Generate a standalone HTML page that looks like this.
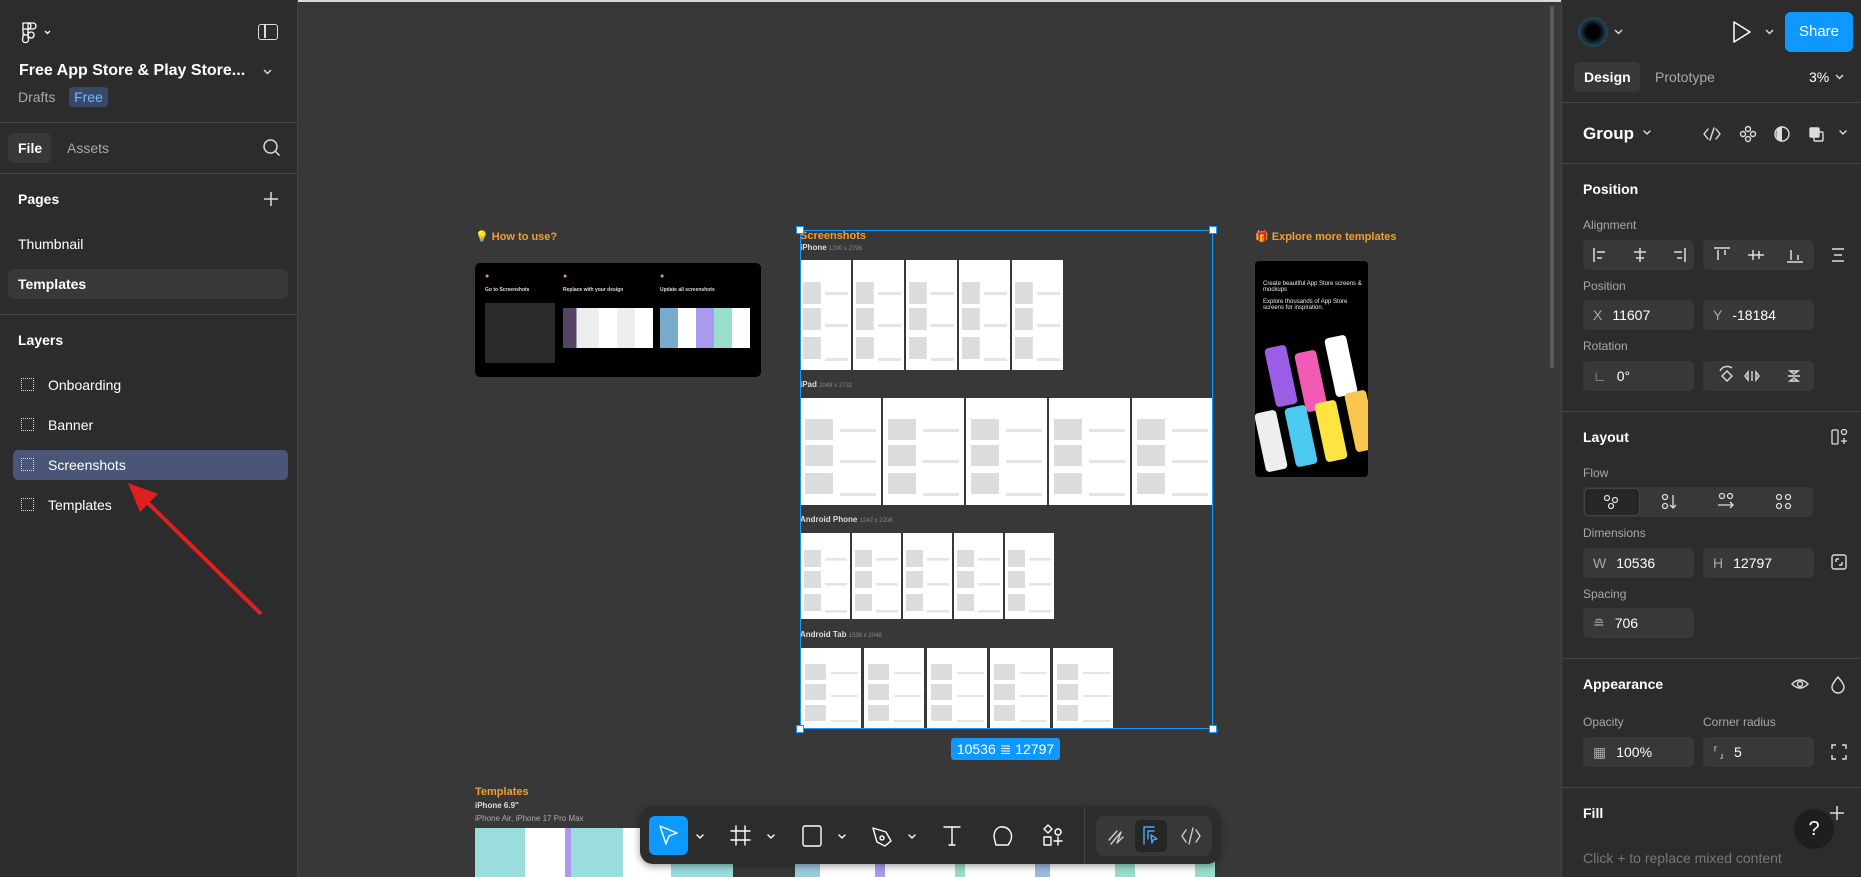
<!DOCTYPE html>
<html><head><meta charset="utf-8"><style>
*{margin:0;padding:0;box-sizing:border-box}
body{width:1861px;height:877px;overflow:hidden;background:#383838;font-family:"Liberation Sans",sans-serif;color:#fff;position:relative}
.a{position:absolute}
.lp{left:0;top:0;width:298px;height:877px;background:#2c2c2c;border-right:1px solid #444}
.rp{left:1561px;top:0;width:300px;height:877px;background:#2c2c2c;border-left:1px solid #444}
.hr{position:absolute;left:0;right:0;height:1px;background:#444}
.t{position:absolute;font-size:14px;white-space:nowrap;line-height:1}
.b{font-weight:bold}
.g{color:#a8a8a8}
.lbl{position:absolute;font-size:12px;color:#a8a8a8;white-space:nowrap;line-height:1}
.fld{position:absolute;background:#383838;border-radius:5px;height:30px;font-size:14px;line-height:30px;padding-left:10px}
.fld span{color:#a8a8a8;margin-right:10px}
.fr{position:absolute;background-color:#fff;background-image:linear-gradient(#dcdcdc,#dcdcdc),linear-gradient(#dcdcdc,#dcdcdc),linear-gradient(#dcdcdc,#dcdcdc),linear-gradient(#e4e4e4,#e4e4e4),linear-gradient(#e4e4e4,#e4e4e4),linear-gradient(#e4e4e4,#e4e4e4);background-size:35% 20%,35% 20%,35% 20%,45% 3%,45% 3%,45% 3%;background-position:10% 25%,10% 55%,10% 88%,90% 30%,90% 60%,90% 92%;background-repeat:no-repeat}
.h{position:absolute;width:8px;height:8px;background:#fff;border:1px solid #0d99ff}
.cl{position:absolute;font-size:11px;font-weight:bold;color:#f0a030;white-space:nowrap}
.wl{position:absolute;font-size:8px;font-weight:bold;color:#ddd;white-space:nowrap}
.wl i{font-style:normal;font-weight:normal;color:#888;font-size:6px}
</style></head><body>
<div class="a" style="left:0;top:0;width:1861px;height:2px;background:#d8d8d8"></div>

<!-- canvas -->
<div class="a" style="left:1550px;top:6px;width:4px;height:362px;background:#5a5a5a;border-radius:2px"></div>
<div class="cl" style="left:475px;top:230px">💡 How to use?</div>
<div class="a" style="left:475px;top:263px;width:286px;height:114px;background:#000;border-radius:5px">
 <div class="a" style="left:10px;top:40px;width:70px;height:60px;background:#2a2a2a"></div>
 <div class="a" style="left:88px;top:45px;width:90px;height:40px;background:linear-gradient(90deg,#546 0 15%,#eee 15% 40%,#fff 40% 60%,#eee 60% 80%,#fff 80%)"></div>
 <div class="a" style="left:185px;top:45px;width:90px;height:40px;background:linear-gradient(90deg,#7ac 0 20%,#fff 20% 40%,#a9e 40% 60%,#9dc 60% 80%,#fff 80%)"></div>
 <div class="a" style="left:10px;top:10px;font-size:7px;color:#f0a030;font-weight:bold">●</div>
 <div class="a" style="left:88px;top:10px;font-size:7px;color:#f0a030;font-weight:bold">●</div>
 <div class="a" style="left:185px;top:10px;font-size:7px;color:#f0a030;font-weight:bold">●</div>
 <div class="a" style="left:10px;top:24px;font-size:5px;color:#ddd;font-weight:bold">Go to Screenshots</div>
 <div class="a" style="left:88px;top:24px;font-size:5px;color:#ddd;font-weight:bold">Replace with your design</div>
 <div class="a" style="left:185px;top:24px;font-size:5px;color:#ddd;font-weight:bold">Update all screenshots</div>
</div>

<div class="cl" style="left:800px;top:230px">Screenshots</div>
<div class="wl" style="left:800px;top:243px">iPhone <i>1290 x 2796</i></div>
<div class="fr" style="left:800px;top:260px;width:51px;height:110px"></div>
<div class="fr" style="left:853px;top:260px;width:51px;height:110px"></div>
<div class="fr" style="left:906px;top:260px;width:51px;height:110px"></div>
<div class="fr" style="left:959px;top:260px;width:51px;height:110px"></div>
<div class="fr" style="left:1012px;top:260px;width:51px;height:110px"></div>
<div class="wl" style="left:800px;top:380px">iPad <i>2048 x 2732</i></div>
<div class="fr" style="left:800px;top:398px;width:81px;height:107px"></div>
<div class="fr" style="left:883px;top:398px;width:81px;height:107px"></div>
<div class="fr" style="left:966px;top:398px;width:81px;height:107px"></div>
<div class="fr" style="left:1049px;top:398px;width:81px;height:107px"></div>
<div class="fr" style="left:1132px;top:398px;width:81px;height:107px"></div>
<div class="wl" style="left:800px;top:515px">Android Phone <i>1242 x 2208</i></div>
<div class="fr" style="left:801px;top:533px;width:49px;height:86px"></div>
<div class="fr" style="left:852px;top:533px;width:49px;height:86px"></div>
<div class="fr" style="left:903px;top:533px;width:49px;height:86px"></div>
<div class="fr" style="left:954px;top:533px;width:49px;height:86px"></div>
<div class="fr" style="left:1005px;top:533px;width:49px;height:86px"></div>
<div class="wl" style="left:800px;top:630px">Android Tab <i>1536 x 2048</i></div>
<div class="fr" style="left:801px;top:648px;width:60px;height:81px"></div>
<div class="fr" style="left:864px;top:648px;width:60px;height:81px"></div>
<div class="fr" style="left:927px;top:648px;width:60px;height:81px"></div>
<div class="fr" style="left:990px;top:648px;width:60px;height:81px"></div>
<div class="fr" style="left:1053px;top:648px;width:60px;height:81px"></div>
<div class="a" style="left:800px;top:230px;width:413px;height:499px;border:1px solid #0d99ff"></div>
<div class="h" style="left:796px;top:226px"></div><div class="h" style="left:1209px;top:226px"></div>
<div class="h" style="left:796px;top:725px"></div><div class="h" style="left:1209px;top:725px"></div>
<div class="a" style="left:951px;top:738px;width:109px;height:22px;background:#0d99ff;border-radius:3px;font-size:14px;line-height:22px;text-align:center">10536 ≣ 12797</div>

<div class="cl" style="left:1255px;top:230px">🎁 Explore more templates</div>
<div class="a" style="left:1255px;top:261px;width:113px;height:216px;background:#000;border-radius:4px;overflow:hidden">
 <div class="a" style="left:8px;top:20px;font-size:6px;color:#eee;width:100px;white-space:normal">Create beautiful App Store screens &amp; mockups<br><br>Explore thousands of App Store screens for inspiration.</div>
 <div class="a" style="left:15px;top:85px;width:22px;height:60px;background:#9b5de5;border-radius:4px;transform:rotate(-12deg)"></div>
 <div class="a" style="left:45px;top:90px;width:22px;height:60px;background:#f15bb5;border-radius:4px;transform:rotate(-12deg)"></div>
 <div class="a" style="left:75px;top:75px;width:22px;height:60px;background:#fff;border-radius:4px;transform:rotate(-12deg)"></div>
 <div class="a" style="left:5px;top:150px;width:22px;height:60px;background:#eee;border-radius:4px;transform:rotate(-12deg)"></div>
 <div class="a" style="left:35px;top:145px;width:22px;height:60px;background:#4cc9f0;border-radius:4px;transform:rotate(-12deg)"></div>
 <div class="a" style="left:65px;top:140px;width:22px;height:60px;background:#fee440;border-radius:4px;transform:rotate(-12deg)"></div>
 <div class="a" style="left:95px;top:130px;width:22px;height:60px;background:#f9c74f;border-radius:4px;transform:rotate(-12deg)"></div>
</div>

<div class="cl" style="left:475px;top:786px">Templates</div>
<div class="wl" style="left:475px;top:801px">iPhone 6.9"</div>
<div class="a" style="left:475px;top:814px;font-size:8px;color:#aaa">iPhone Air, iPhone 17 Pro Max</div>
<div class="a" style="left:475px;top:828px;width:740px;height:49px;background:linear-gradient(90deg,#9dd 0 50px,#fff 50px 55px,#fff 55px 90px,#a9e 90px 96px,#9dd 96px 148px,#fff 148px 196px,#9dd 196px 258px,#383838 258px 320px,#9cd 320px 345px,#fff 345px 400px,#a9e 400px 410px,#fff 410px 480px,#9dc 480px 490px,#fff 490px 560px,#9bd 560px 575px,#fff 575px 640px,#9dc 640px 660px,#fff 660px 720px,#9dc 720px)"></div>

<!-- toolbar -->
<div class="a" style="left:640px;top:807px;width:580px;height:57px;background:#2c2c2c;border-radius:13px;box-shadow:0 2px 8px rgba(0,0,0,.4)">
 <div class="a" style="left:9px;top:9px;width:39px;height:39px;background:#0d99ff;border-radius:6px"></div>
 <div class="a" style="left:444px;top:0;width:1px;height:57px;background:#444"></div>
 <div class="a" style="left:456px;top:9px;width:116px;height:40px;background:#383838;border-radius:8px"></div>
 <div class="a" style="left:495px;top:13px;width:32px;height:32px;background:#262626;border-radius:5px"></div>
 <svg class="a" style="left:0;top:0" width="580" height="57" fill="none" stroke="#fff" stroke-width="1.4" stroke-linejoin="round" stroke-linecap="round">
  <path d="M20 19 L37 26 L29 29 L26 37 Z"/>
  <path d="M57 28l3 3 3-3M128 28l3 3 3-3M199 28l3 3 3-3M269 28l3 3 3-3"/>
  <path d="M96 19v19M105 19v19M91 24h19M91 33h19"/>
  <rect x="163" y="19" width="18" height="20" rx="2"/>
  <path d="M233 21 L246 25 L251 34 L245 39 L237 35 Z M242 29 a2 2 0 1 0 .1 0"/>
  <path d="M304 20h16M312 20v18M309 38h6"/>
  <path d="M356 38 L368 38 Q373 32 371 26 Q368 19 360 20 Q354 22 354 30 Z"/>
  <path d="M408 18l4 4-4 4-4-4zM418 22a3 3 0 1 0 .1 0M404 30h7v8h-7zM418 30v8M414 34h8"/>
 </svg>
 <svg class="a" style="left:0;top:0" width="580" height="57" fill="none" stroke-width="1.4" stroke-linecap="round" stroke-linejoin="round">
  <path d="M469 33 L477 24 M471 37 L481 25 L477 36 L483 30" stroke="#ccc"/>
  <path d="M504 20h10M504 20v17M508 24h6M508 24v8 M511 28l6 4-4 1-1 3z" stroke="#4aa8ff"/>
  <path d="M546 23l-4 6 4 6M556 23l4 6-4 6M553 21l-4 16" stroke="#ccc"/>
 </svg>
</div>

<!-- left panel -->
<div class="a lp">
 <svg class="a" style="left:21px;top:20px" width="40" height="24" fill="none" stroke="#fff" stroke-width="1.3"><path d="M1 1h5a3 3 0 0 1 0 6H1zM6 1h5a3 3 0 0 1 0 6H6zM1 7h5v6H4a3 3 0 0 1-3-3zM9 10a3 3 0 1 0 .1 0M1 13h5v3a3 3 0 1 1-5 0z" transform="translate(1,2)"/><path d="M24 11l2.5 2.5 2.5-2.5"/></svg>
 <div class="a" style="left:258px;top:24px;width:20px;height:16px;border:1.5px solid #ddd;border-radius:3px"><div class="a" style="left:5px;top:0;width:1.5px;height:13px;background:#ddd"></div></div>
 <div class="t b" style="left:19px;top:63px;font-size:16px">Free App Store &amp; Play Store...</div>
 <svg class="a" style="left:263px;top:68px" width="10" height="8" fill="none" stroke="#ddd" stroke-width="1.4"><path d="M1 2l3.5 3.5L8 2"/></svg>
 <div class="t g" style="left:18px;top:90px">Drafts</div>
 <div class="a" style="left:69px;top:87px;width:39px;height:20px;background:#394a68;border-radius:4px;color:#7bb5ff;font-size:14px;line-height:20px;text-align:center">Free</div>
 <div class="hr" style="top:122px"></div>
 <div class="a" style="left:8px;top:133px;width:43px;height:30px;background:#383838;border-radius:5px"></div>
 <div class="t b" style="left:18px;top:141px">File</div>
 <div class="t g" style="left:67px;top:141px">Assets</div>
 <svg class="a" style="left:262px;top:138px" width="20" height="20" fill="none" stroke="#ddd" stroke-width="1.5"><circle cx="8.5" cy="8.5" r="6.5"/><path d="M13.5 13.5l4 4"/></svg>
 <div class="hr" style="top:173px"></div>
 <div class="t b" style="left:18px;top:192px">Pages</div>
 <svg class="a" style="left:263px;top:191px" width="16" height="16" stroke="#ddd" stroke-width="1.5"><path d="M8 1v14M1 8h14"/></svg>
 <div class="t" style="left:18px;top:237px">Thumbnail</div>
 <div class="a" style="left:8px;top:269px;width:280px;height:30px;background:#383838;border-radius:5px"></div>
 <div class="t b" style="left:18px;top:277px">Templates</div>
 <div class="hr" style="top:314px"></div>
 <div class="t b" style="left:18px;top:333px">Layers</div>
 <div class="a" style="left:13px;top:450px;width:275px;height:30px;background:#4a5578;border-radius:5px"></div>
 <div class="a" style="left:21px;top:378px;width:13px;height:13px;border:1.4px dotted #ddd"></div>
 <div class="t" style="left:48px;top:378px">Onboarding</div>
 <div class="a" style="left:21px;top:418px;width:13px;height:13px;border:1.4px dotted #ddd"></div>
 <div class="t" style="left:48px;top:418px">Banner</div>
 <div class="a" style="left:21px;top:458px;width:13px;height:13px;border:1.4px dotted #ddd"></div>
 <div class="t" style="left:48px;top:458px">Screenshots</div>
 <div class="a" style="left:21px;top:498px;width:13px;height:13px;border:1.4px dotted #ddd"></div>
 <div class="t" style="left:48px;top:498px">Templates</div>
 <svg class="a" style="left:0;top:0" width="298" height="640"><path d="M261 614 L145 500" stroke="#e02020" stroke-width="4"/><path d="M128 483 L158 494 L140 512 Z" fill="#e02020"/></svg>
</div>

<!-- right panel -->
<div class="a rp">
 <div class="a" style="left:16px;top:17px;width:30px;height:30px;border-radius:50%;background:radial-gradient(circle,#000 30%,#1d3a4a 60%,#4a7080 100%)"></div>
 <svg class="a" style="left:52px;top:28px" width="10" height="8" fill="none" stroke="#ddd" stroke-width="1.4"><path d="M1 2l3.5 3.5L8 2"/></svg>
 <svg class="a" style="left:169px;top:20px" width="22" height="24" fill="none" stroke="#fff" stroke-width="1.5" stroke-linejoin="round"><path d="M3 2 L19 12 L3 22 Z"/></svg>
 <svg class="a" style="left:203px;top:28px" width="10" height="8" fill="none" stroke="#ddd" stroke-width="1.4"><path d="M1 2l3.5 3.5L8 2"/></svg>
 <div class="a" style="left:223px;top:12px;width:68px;height:40px;background:#0d99ff;border-radius:6px;font-size:15px;line-height:40px;text-align:center">Share</div>
 <div class="a" style="left:12px;top:62px;width:66px;height:30px;background:#383838;border-radius:5px"></div>
 <div class="t b" style="left:22px;top:70px">Design</div>
 <div class="t g" style="left:93px;top:70px">Prototype</div>
 <div class="t" style="left:247px;top:70px">3%</div>
 <svg class="a" style="left:273px;top:73px" width="10" height="8" fill="none" stroke="#ddd" stroke-width="1.4"><path d="M1 2l3.5 3.5L8 2"/></svg>
 <div class="hr" style="top:102px"></div>
 <div class="t b" style="left:21px;top:125px;font-size:17px">Group</div>
 <svg class="a" style="left:0;top:120px" width="300" height="28" fill="none" stroke="#ddd" stroke-width="1.4" stroke-linecap="round" stroke-linejoin="round">
  <path d="M82 11l3 3 3-3"/>
  <path d="M146 9l-4 5 4 5M154 9l4 5-4 5M152 8l-4 12"/>
  <circle cx="186" cy="9" r="2.5"/><circle cx="181" cy="14" r="2.5"/><circle cx="191" cy="14" r="2.5"/><circle cx="186" cy="19" r="2.5"/>
  <circle cx="220" cy="14" r="7"/><path d="M220 7a5 7 0 0 0 0 14" fill="#ddd"/>
  <rect x="248" y="8" width="9" height="9" rx="1" fill="#ddd"/><rect x="252" y="12" width="9" height="9" rx="1"/>
  <path d="M278 11l3 3 3-3"/>
 </svg>
 <div class="hr" style="top:163px"></div>
 <div class="t b" style="left:21px;top:182px">Position</div>
 <div class="lbl" style="left:21px;top:219px">Alignment</div>
 <div class="a" style="left:21px;top:240px;width:111px;height:30px;background:#383838;border-radius:5px"></div>
 <div class="a" style="left:141px;top:240px;width:111px;height:30px;background:#383838;border-radius:5px"></div>
 <svg class="a" style="left:0;top:240px" width="300" height="30" fill="none" stroke="#ddd" stroke-width="1.5">
  <path d="M32 8v14M35 12h8M35 18h5"/><path d="M78 8v14M72 12h12M74 18h8"/><path d="M123 8v14M112 12h8M115 18h5"/>
  <path d="M152 8h16M156 10v10M163 10v5"/><path d="M186 15h16M191 10v10M197 11v8"/><path d="M225 22h16M229 10v10M236 15v5"/>
  <path d="M270 9h12M272 15h8M270 21h12"/>
 </svg>
 <div class="lbl" style="left:21px;top:280px">Position</div>
 <div class="fld" style="left:21px;top:300px;width:111px"><span>X</span>11607</div>
 <div class="fld" style="left:141px;top:300px;width:111px"><span>Y</span>-18184</div>
 <div class="lbl" style="left:21px;top:340px">Rotation</div>
 <div class="fld" style="left:21px;top:361px;width:111px"><span>∟</span>0°</div>
 <div class="a" style="left:141px;top:361px;width:111px;height:30px;background:#383838;border-radius:5px"></div>
 <svg class="a" style="left:0;top:361px" width="300" height="30" fill="none" stroke="#ddd" stroke-width="1.4">
  <path d="M160 15l5-5 5 5-5 5z M158 10a8 8 0 0 1 12-3"/><path d="M190 10v10M186 11l-3 4 3 4zM194 11l3 4-3 4z"/><path d="M226 15h12M228 10h8l-4 3zM228 20h8l-4-3z"/>
 </svg>
 <div class="hr" style="top:411px"></div>
 <div class="t b" style="left:21px;top:430px">Layout</div>
 <svg class="a" style="left:268px;top:428px" width="20" height="20" fill="none" stroke="#ddd" stroke-width="1.3"><rect x="2" y="2" width="6" height="14" rx="1"/><circle cx="14" cy="4" r="2.5"/><path d="M14 10v6M11 13h6"/></svg>
 <div class="lbl" style="left:21px;top:467px">Flow</div>
 <div class="a" style="left:21px;top:487px;width:230px;height:30px;background:#383838;border-radius:5px"></div>
 <div class="a" style="left:22px;top:488px;width:56px;height:28px;background:#262626;border-radius:5px;border:1px solid #444"></div>
 <svg class="a" style="left:0;top:487px" width="300" height="30" fill="none" stroke="#ddd" stroke-width="1.3">
  <circle cx="45" cy="11" r="2.5"/><circle cx="53" cy="13" r="2.5"/><circle cx="49" cy="19" r="2.5"/>
  <circle cx="103" cy="10" r="2.5"/><circle cx="103" cy="19" r="2.5"/><path d="M111 8v13M108 18l3 3 3-3"/>
  <circle cx="160" cy="9" r="2.5"/><circle cx="168" cy="9" r="2.5"/><path d="M156 18h15M168 15l3 3-3 3"/>
  <circle cx="217" cy="10" r="2.5"/><circle cx="226" cy="10" r="2.5"/><circle cx="217" cy="19" r="2.5"/><circle cx="226" cy="19" r="2.5"/>
 </svg>
 <div class="lbl" style="left:21px;top:527px">Dimensions</div>
 <div class="fld" style="left:21px;top:548px;width:111px"><span>W</span>10536</div>
 <div class="fld" style="left:141px;top:548px;width:111px"><span>H</span>12797</div>
 <svg class="a" style="left:268px;top:553px" width="20" height="20" fill="none" stroke="#ddd" stroke-width="1.4"><rect x="2" y="2" width="14" height="14" rx="2"/><path d="M6 6h3M6 6v3M12 12h-3M12 12v-3"/></svg>
 <div class="lbl" style="left:21px;top:588px">Spacing</div>
 <div class="fld" style="left:21px;top:608px;width:111px"><span>≘</span>706</div>
 <div class="hr" style="top:658px"></div>
 <div class="t b" style="left:21px;top:677px">Appearance</div>
 <svg class="a" style="left:228px;top:674px" width="60" height="20" fill="none" stroke="#ddd" stroke-width="1.4"><path d="M2 10q8-8 16 0q-8 8-16 0z"/><circle cx="10" cy="10" r="2.5"/><path d="M48 3q-6 7-6 10a6 6 0 0 0 12 0q0-3-6-10z"/></svg>
 <div class="lbl" style="left:21px;top:716px">Opacity</div>
 <div class="lbl" style="left:141px;top:716px">Corner radius</div>
 <div class="fld" style="left:21px;top:737px;width:111px"><span>▦</span>100%</div>
 <div class="fld" style="left:141px;top:737px;width:111px"><span>⸢⸥</span>5</div>
 <svg class="a" style="left:268px;top:743px" width="18" height="18" fill="none" stroke="#ddd" stroke-width="1.4"><path d="M2 6V2h4M12 2h4v4M16 12v4h-4M6 16H2v-4"/></svg>
 <div class="hr" style="top:787px"></div>
 <div class="t b" style="left:21px;top:806px">Fill</div>
 <svg class="a" style="left:267px;top:805px" width="16" height="16" stroke="#ddd" stroke-width="1.5"><path d="M8 1v14M1 8h14"/></svg>
 <div class="a" style="left:232px;top:809px;width:40px;height:40px;border-radius:50%;background:#1e1e1e;font-size:20px;line-height:40px;text-align:center">?</div>
 <div class="t" style="left:21px;top:851px;color:#777">Click + to replace mixed content</div>
</div>
</body></html>
